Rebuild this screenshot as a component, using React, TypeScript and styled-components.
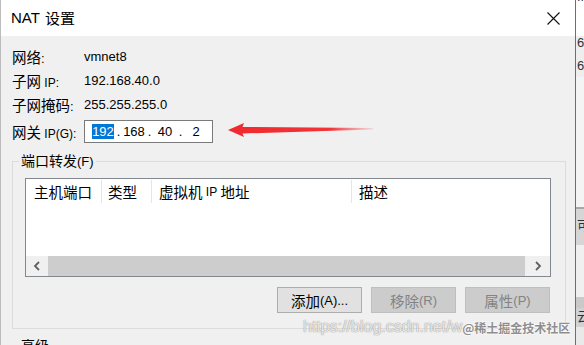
import React from "react";
import styled, { createGlobalStyle } from "styled-components";

const GlobalStyle = createGlobalStyle`
  html, body { margin: 0; padding: 0; overflow: hidden; background: #ffffff; }
  body { font-family: "Liberation Sans", "Noto Sans CJK SC", sans-serif; font-size: 13px; color: #000; }
  * { box-sizing: border-box; }
`;

const Screen = styled.div`
  display: flex;
  width: 584px;
  height: 345px;
  overflow: hidden;
`;

const Dialog = styled.div`
  position: relative;
  width: 576px;
  flex: none;
  display: flex;
  flex-direction: column;
  background: #f0f0f0;
  border-left: 1px solid #bcbcbc;
  border-right: 1px solid #6e6e6e;
  overflow: hidden;
`;

const TitleBar = styled.div`
  height: 36px;
  flex: none;
  background: #ffffff;
  display: flex;
  align-items: center;
  justify-content: space-between;
  padding: 0 15px 0 10px;
`;

const Title = styled.div`
  font-size: 15px;
  line-height: 20px;
  display: flex;
  align-items: center;
  gap: 5px;
  color: #000;
`;

const Cjk = styled.span<{ $size?: number }>`
  font-family: "Noto Sans CJK SC", sans-serif;
  font-size: ${(p) => p.$size ?? 14.5}px;
`;

const Latin = styled.span<{ $size?: number }>`
  font-family: "Liberation Sans", sans-serif;
  font-size: ${(p) => p.$size ?? 13}px;
`;

const Body = styled.div`
  flex: 1;
  display: flex;
  flex-direction: column;
  padding: 8px 0 0 11px;
`;

const InfoRow = styled.div<{ $gap?: number }>`
  display: flex;
  align-items: center;
  height: ${(p) => (p.$gap ? 23 : 24)}px;
  margin-top: ${(p) => p.$gap ?? 0}px;
`;

const Label = styled.div`
  width: 72px;
  flex: none;
  white-space: nowrap;
  color: #000;
`;

const Value = styled.div`
  font-family: "Liberation Sans", sans-serif;
  font-size: 13px;
  color: #000;
`;

const IpBox = styled.div`
  width: 129px;
  height: 23px;
  border: 1px solid #7a7a7a;
  background: #ffffff;
  display: flex;
  align-items: center;
  padding-left: 5px;
  font-family: "Liberation Sans", sans-serif;
  font-size: 13px;
`;

const IpField = styled.span`
  width: 26px;
  text-align: center;
  display: inline-block;
`;

const IpDot = styled.span`
  width: 5px;
  text-align: center;
  display: inline-block;
`;

const Selected = styled.span`
  display: inline-block;
  background: #0078d7;
  color: #ffffff;
  line-height: 15px;
`;

const Group = styled.fieldset<{ $top: number }>`
  margin: ${(p) => p.$top}px 9px 0 0;
  padding: 0;
  min-width: 0;
  border: 1px solid #dcdcdc;
  flex: none;
`;

const Legend = styled.legend`
  margin-left: 6px;
  padding: 0 2px;
  line-height: 18px;
  color: #000;
`;

const GroupContent = styled.div`
  padding: 7px 14px 15px 12px;
  display: flex;
  flex-direction: column;
`;

const ListView = styled.div`
  height: 99px;
  border: 1px solid #828790;
  background: #ffffff;
  display: flex;
  flex-direction: column;
`;

const Header = styled.div`
  height: 25px;
  flex: none;
  display: flex;
  align-items: center;
`;

const HeadCell = styled.div<{ $w?: number; $pad: number; $last?: boolean }>`
  ${(p) => (p.$w ? `width: ${p.$w}px; flex: none;` : "flex: 1;")}
  height: 23px;
  display: flex;
  align-items: center;
  padding-left: ${(p) => p.$pad}px;
  border-right: ${(p) => (p.$last ? "none" : "1px solid #e5e5e5")};
  white-space: nowrap;
`;

const ListBody = styled.div`
  flex: 1;
`;

const HScroll = styled.div`
  height: 20px;
  flex: none;
  display: flex;
`;

const ScrollBtn = styled.div<{ $w: number }>`
  width: ${(p) => p.$w}px;
  flex: none;
  background: #f0f0f0;
  display: flex;
  align-items: center;
  justify-content: center;
`;

const ScrollThumb = styled.div`
  flex: 1;
  background: #cdcdcd;
`;

const ButtonRow = styled.div`
  margin-top: 10px;
  display: flex;
  justify-content: flex-end;
  gap: 9px;
  padding-right: 1px;
`;

const Button = styled.div<{ $disabled?: boolean }>`
  width: 85px;
  height: 26px;
  display: flex;
  align-items: center;
  justify-content: center;
  background: ${(p) => (p.$disabled ? "#cccccc" : "#e1e1e1")};
  border: 1px solid ${(p) => (p.$disabled ? "#bfbfbf" : "#adadad")};
  color: ${(p) => (p.$disabled ? "#838383" : "#000000")};
  white-space: nowrap;
`;

const AdvancedContent = styled.div`
  height: 40px;
`;

const ArrowSvg = styled.svg`
  position: absolute;
  left: 225px;
  top: 118px;
  pointer-events: none;
`;

const Watermark = styled.div`
  position: absolute;
  left: 302px;
  top: 318px;
  display: flex;
  align-items: center;
  white-space: nowrap;
  pointer-events: none;
`;

const WmUrl = styled.span`
  font-family: "Liberation Sans", sans-serif;
  font-size: 16px;
  color: rgba(255, 255, 255, 0.8);
  text-shadow: 0 0 1px rgba(110, 110, 110, 0.7), 0 0 1px rgba(110, 110, 110, 0.5);
`;

const WmBrand = styled.span`
  font-family: "Noto Sans CJK SC", sans-serif;
  font-size: 12px;
  font-weight: 700;
  color: #8e8e8e;
  text-shadow: 0 0 2px #ffffff, 0 0 2px #ffffff, 0 0 1px #ffffff;
`;

const Strip = styled.div`
  flex: 1;
  display: flex;
  flex-direction: column;
  overflow: hidden;
  font-family: "Liberation Sans", "Noto Sans CJK SC", sans-serif;
  font-size: 13px;
  color: #333;
`;

const StripSeg = styled.div<{ $h: number; $bg: string }>`
  height: ${(p) => p.$h}px;
  flex: none;
  background: ${(p) => p.$bg};
  white-space: nowrap;
  overflow: hidden;
  line-height: 20px;
`;

const StripText = styled.div<{ $top: number }>`
  margin-top: ${(p) => p.$top}px;
  padding-left: 1px;
  line-height: 22px;
`;

function Chevron({ dir }: { dir: "left" | "right" }) {
  return (
    <svg width="8" height="10" viewBox="0 0 8 10">
      <polyline
        points={dir === "left" ? "6,1 2,5 6,9" : "2,1 6,5 2,9"}
        fill="none"
        stroke="#606060"
        strokeWidth="1.8"
      />
    </svg>
  );
}

export default function App() {
  return (
    <>
      <GlobalStyle />
      <Screen>
        <Dialog>
          <TitleBar>
            <Title>
              <Latin $size={15}>NAT</Latin>
              <Cjk $size={15}>设置</Cjk>
            </Title>
            <svg width="13" height="13" viewBox="0 0 13 13">
              <path d="M0.5 0.5 L12.5 12.5 M12.5 0.5 L0.5 12.5" stroke="#111" strokeWidth="1.1" />
            </svg>
          </TitleBar>
          <Body>
            <InfoRow>
              <Label>
                <Cjk>网络</Cjk>
                <Latin>:</Latin>
              </Label>
              <Value>vmnet8</Value>
            </InfoRow>
            <InfoRow>
              <Label>
                <Cjk>子网</Cjk>
                <Latin $size={12}> IP:</Latin>
              </Label>
              <Value>192.168.40.0</Value>
            </InfoRow>
            <InfoRow>
              <Label>
                <Cjk>子网掩码</Cjk>
                <Latin>:</Latin>
              </Label>
              <Value>255.255.255.0</Value>
            </InfoRow>
            <InfoRow $gap={4}>
              <Label>
                <Cjk>网关</Cjk>
                <Latin $size={12}> IP(G):</Latin>
              </Label>
              <IpBox>
                <IpField>
                  <Selected>192</Selected>
                </IpField>
                <IpDot>.</IpDot>
                <IpField>168</IpField>
                <IpDot>.</IpDot>
                <IpField>40</IpField>
                <IpDot>.</IpDot>
                <IpField>2</IpField>
              </IpBox>
            </InfoRow>

            <Group $top={8}>
              <Legend>
                <Cjk $size={14}>端口转发</Cjk>
                <Latin>(F)</Latin>
              </Legend>
              <GroupContent>
                <ListView>
                  <Header>
                    <HeadCell $w={76} $pad={8}>
                      <Cjk>主机端口</Cjk>
                    </HeadCell>
                    <HeadCell $w={50} $pad={6}>
                      <Cjk>类型</Cjk>
                    </HeadCell>
                    <HeadCell $w={200} $pad={7}>
                      <Cjk>虚拟机</Cjk>
                      <Latin $size={12}>&nbsp;IP&nbsp;</Latin>
                      <Cjk>地址</Cjk>
                    </HeadCell>
                    <HeadCell $pad={7} $last>
                      <Cjk>描述</Cjk>
                    </HeadCell>
                  </Header>
                  <ListBody />
                  <HScroll>
                    <ScrollBtn $w={22}>
                      <Chevron dir="left" />
                    </ScrollBtn>
                    <ScrollThumb />
                    <ScrollBtn $w={25}>
                      <Chevron dir="right" />
                    </ScrollBtn>
                  </HScroll>
                </ListView>
                <ButtonRow>
                  <Button>
                    <Cjk>添加</Cjk>
                    <Latin>(A)...</Latin>
                  </Button>
                  <Button $disabled>
                    <Cjk>移除</Cjk>
                    <Latin>(R)</Latin>
                  </Button>
                  <Button $disabled>
                    <Cjk>属性</Cjk>
                    <Latin>(P)</Latin>
                  </Button>
                </ButtonRow>
              </GroupContent>
            </Group>

            <Group $top={7}>
              <Legend>
                <Cjk $size={14}>高级</Cjk>
              </Legend>
              <AdvancedContent />
            </Group>
          </Body>

          <ArrowSvg width="150" height="24" viewBox="0 0 150 24">
            <defs>
              <linearGradient id="arrowFade" x1="0" x2="1" y1="0" y2="0">
                <stop offset="0" stopColor="#f02a2e" />
                <stop offset="0.7" stopColor="#f02a2e" stopOpacity="0.95" />
                <stop offset="1" stopColor="#f5535a" stopOpacity="0.15" />
              </linearGradient>
            </defs>
            <path
              d="M2 12 L18 5 L16.5 9 L146 10 L148 10.7 L146 11.4 L16.5 15.5 L18 19 Z"
              fill="url(#arrowFade)"
            />
          </ArrowSvg>

          <Watermark>
            <WmUrl>https://blog.csdn.net/w</WmUrl>
            <WmBrand>@稀土掘金技术社区</WmBrand>
          </Watermark>
        </Dialog>

        <Strip>
          <StripSeg $h={36} $bg="#ffffff">
            <StripText $top={-14}>ff.</StripText>
          </StripSeg>
          <StripSeg $h={41} $bg="#eeeeee">
            <StripText $top={-4}>68</StripText>
            <StripText $top={1}>68</StripText>
          </StripSeg>
          <StripSeg $h={130} $bg="#f4f4f4" />
          <StripSeg $h={2} $bg="#a8a8a8" />
          <StripSeg $h={36} $bg="#d6d6d6">
            <StripText $top={6}>可</StripText>
          </StripSeg>
          <StripSeg $h={52} $bg="#f0f0f0" />
          <StripSeg $h={11} $bg="#c9c9c9" />
          <StripSeg $h={19} $bg="#d2d2d2">
            <StripText $top={-2}>云</StripText>
          </StripSeg>
          <StripSeg $h={18} $bg="#e9e9e9" />
        </Strip>
      </Screen>
    </>
  );
}
